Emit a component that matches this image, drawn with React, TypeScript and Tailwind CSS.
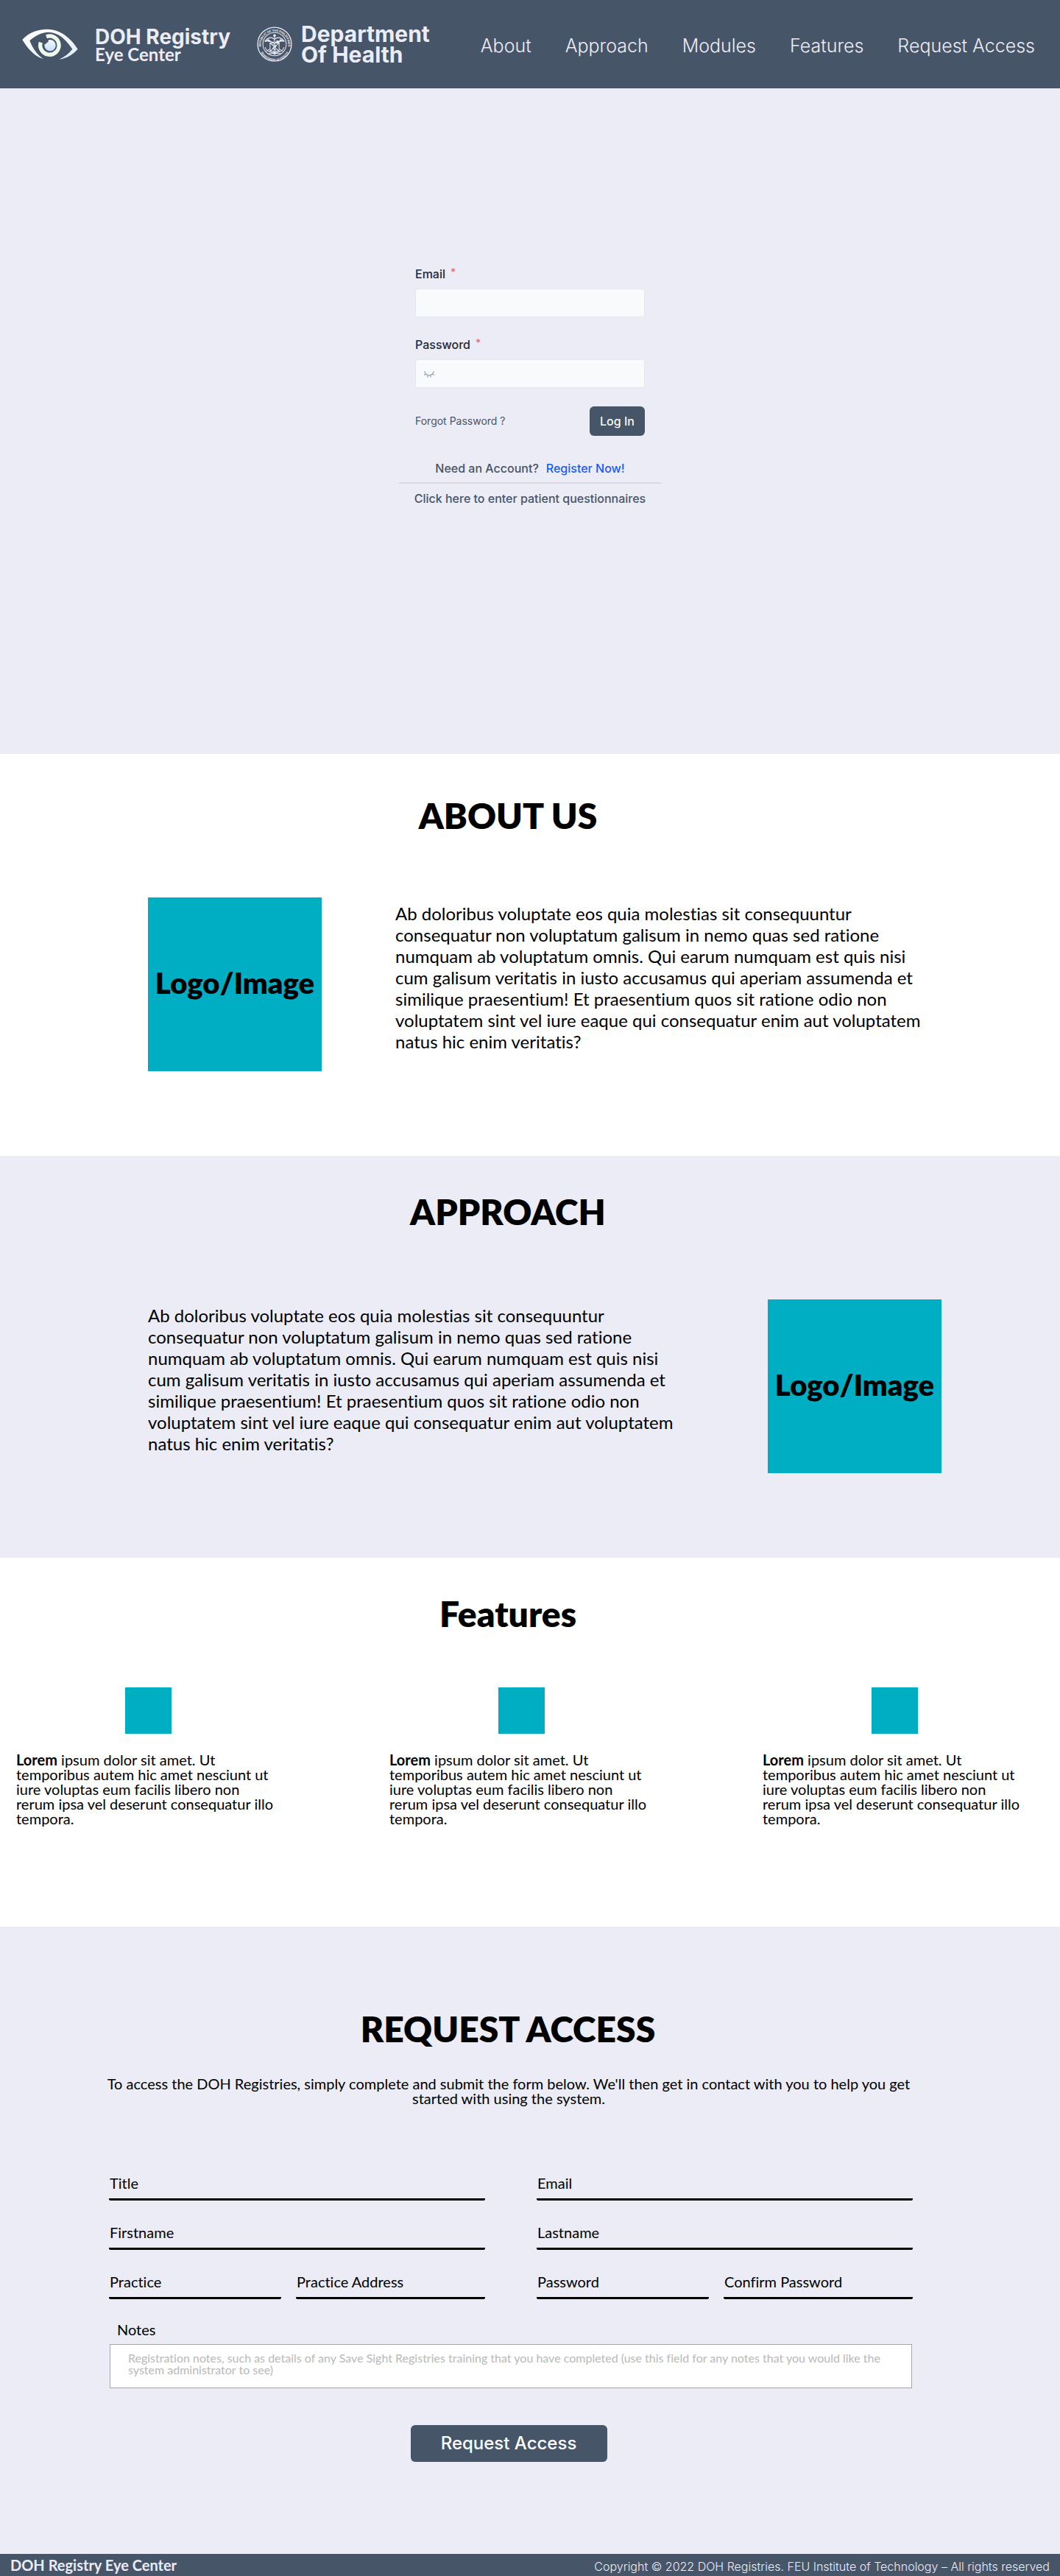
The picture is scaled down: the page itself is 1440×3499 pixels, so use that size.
import type { ReactNode } from 'react';

const navItems = ['About', 'Approach', 'Modules', 'Features', 'Request Access'];

const blurb =
  'Ab doloribus voluptate eos quia molestias sit consequuntur consequatur non voluptatum galisum in nemo quas sed ratione numquam ab voluptatum omnis. Qui earum numquam est quis nisi cum galisum veritatis in iusto accusamus qui aperiam assumenda et similique praesentium! Et praesentium quos sit ratione odio non voluptatem sint vel iure eaque qui consequatur enim aut voluptatem natus hic enim veritatis?';

function EyeLogo() {
  return (
    <svg viewBox="30 38 228 126" className="h-[42px] w-[76px] shrink-0" aria-hidden="true">
      <defs>
        <linearGradient id="lid" x1="0" y1="0" x2="1" y2="1">
          <stop offset="0" stopColor="#ffffff" />
          <stop offset="0.5" stopColor="#f3f8ff" />
          <stop offset="1" stopColor="#dcebfd" />
        </linearGradient>
        <linearGradient id="pupil" x1="0" y1="0" x2="0" y2="1">
          <stop offset="0" stopColor="#f4f9ff" />
          <stop offset="1" stopColor="#c5dffb" />
        </linearGradient>
      </defs>
      <path
        fill="url(#lid)"
        d="M31 83C55 54 95 40 132 40C185 40 228 75 257 121C238 142 215 158 181 163C205 152 222 138 235 121C205 76 175 53 138 52C110 52 80 68 61 87C72 115 90 145 117 161C80 151 52 118 31 83Z"
      />
      <path d="M129 70A38 38 0 1 1 106 94" fill="none" stroke="#f0faea" strokeWidth="16" />
      <path
        fill="url(#pupil)"
        d="M144 83A23 23 0 1 1 122 100C127 101 131 98 130 94C136 96 139 91 136 86A23 23 0 0 1 144 83Z"
      />
    </svg>
  );
}

function HealthSeal() {
  return (
    <svg viewBox="0 0 94 94" className="h-12 w-12 shrink-0" role="img" aria-label="Department of Health seal">
      <defs>
        <path id="seal-top" d="M12 58A36 36 0 1 1 82 58" />
        <path id="seal-bottom" d="M6 50A41 41 0 0 0 88 50" />
      </defs>
      <g fill="none" stroke="#ebecf5">
        <circle cx="47" cy="47" r="45" strokeWidth="2.5" />
        <circle cx="47" cy="47" r="31" strokeWidth="2" />
        <path d="M47 24V70M35 44H59V66H35ZM35 44L59 66M59 44L35 66" strokeWidth="2" />
        <path d="M47 34C38 26 28 30 21 40C30 35 34 42 45 42M47 34C56 26 66 30 73 40C64 35 60 42 49 42" strokeWidth="2.5" />
        <path d="M42 48C53 50 53 54 46 55C40 57 43 62 51 62M22 55C24 64 32 68 42 70M72 55C70 64 62 68 52 70M26 66L34 60M68 66L60 60M30 72L64 72" strokeWidth="2" />
      </g>
      <g fill="#ebecf5">
        <circle cx="47" cy="24" r="3.5" />
        <path d="M52 37H60V43H52ZM40 68H54L47 76ZM24 38L31 34L40 41ZM70 38L63 34L54 41Z" />
      </g>
      <g fill="#ebecf5" fontFamily="Inter, sans-serif" fontWeight="700" textAnchor="middle">
        <text fontSize="8">
          <textPath href="#seal-top" startOffset="50%">REPUBLIC OF THE PHILIPPINES</textPath>
        </text>
        <text fontSize="7">
          <textPath href="#seal-bottom" startOffset="50%">DEPARTMENT OF HEALTH</textPath>
        </text>
      </g>
    </svg>
  );
}

function ClosedEye() {
  return (
    <svg viewBox="0 0 14 9" className="absolute top-4 left-3 h-[9px] w-[14px]" fill="none" stroke="#94a3b8" strokeWidth="1.3" strokeLinecap="round" aria-hidden="true">
      <path d="M0.7 0.8C2 4 4.2 5.9 7 5.9S12 4 13.3 0.8M2.4 3.8L0.8 5.2M11.6 3.8L13.2 5.2M5.3 5.8L4.8 8M8.7 5.8L9.2 8" />
    </svg>
  );
}

function Header() {
  return (
    <header className="flex h-[120px] items-center bg-[#475569] pr-[34px] pl-[30px] text-[#ebecf5]">
      <EyeLogo />
      <p className="ml-[23px] font-['Inter',sans-serif] text-[28px] leading-7 font-bold whitespace-nowrap">
        DOH Registry
        <span className="block font-['Lato',sans-serif] text-2xl leading-5">Eye Center</span>
      </p>
      <div className="ml-9 flex items-center gap-3">
        <HealthSeal />
        <p className="font-['Inter',sans-serif] text-[30px] leading-7 font-bold whitespace-nowrap">
          Department
          <br />
          Of Health
        </p>
      </div>
      <nav className="ml-auto flex items-center gap-[46px] pt-1 font-['Inter',sans-serif] text-[25px] leading-8 font-light whitespace-nowrap">
        {navItems.map((item) => (
          <a key={item} href={'#' + item.toLowerCase().replace(' ', '-')}>
            {item}
          </a>
        ))}
      </nav>
    </header>
  );
}

function LoginField({ id, label, type, children }: { id: string; label: string; type: string; children?: ReactNode }) {
  return (
    <div>
      <label htmlFor={id} className="mb-2 flex gap-[7px] font-medium text-slate-800">
        {label}
        <span className="text-sm leading-5 text-red-400">*</span>
      </label>
      <div className="relative">
        <input id={id} type={type} className="block h-[39px] w-full rounded-[3px] border border-slate-200 bg-slate-50 pr-3 pl-9 text-slate-800" />
        {children}
      </div>
    </div>
  );
}

function Login() {
  return (
    <section className="flex justify-center bg-[#ebecf5] pt-60 pb-[335px] font-['Inter',sans-serif] text-base text-[#475569]">
      <form className="w-[356px]" onSubmit={(e) => e.preventDefault()}>
        <div className="mx-auto flex w-[312px] flex-col gap-[25px]">
          <LoginField id="login-email" label="Email" type="email" />
          <LoginField id="login-password" label="Password" type="password">
            <ClosedEye />
          </LoginField>
          <div className="flex items-center justify-between">
            <a href="#forgot" className="text-sm">
              Forgot Password ?
            </a>
            <button type="submit" className="h-10 w-[75px] rounded-md bg-[#475569] font-medium text-slate-50">
              Log In
            </button>
          </div>
        </div>
        <p className="mt-8 flex justify-center gap-[10px] border-b-2 border-[#d9dade] pb-[7px] font-medium">
          Need an Account?
          <a href="#register" className="text-blue-600">
            Register Now!
          </a>
        </p>
        <a href="#questionnaires" className="mt-2 block text-center font-medium whitespace-nowrap">
          Click here to enter patient questionnaires
        </a>
      </form>
    </section>
  );
}

function Heading({ children }: { children: ReactNode }) {
  return <h2 className="pr-[60px] text-center text-5xl leading-none font-extrabold">{children}</h2>;
}

function ImageBlock() {
  return (
    <div className="flex size-[236px] shrink-0 items-center justify-center bg-[#00aec3] pb-1 text-[40px] leading-none font-extrabold">
      Logo/Image
    </div>
  );
}

function Blurb() {
  return <p className="w-[720px] pt-[7px] text-2xl leading-[29px]">{blurb}</p>;
}

function Feature() {
  return (
    <article className="w-[358px]">
      <div className="mx-auto mb-[25px] size-[63px] bg-[#00aec3]" />
      <p className="text-xl leading-5">
        <b>Lorem</b> ipsum dolor sit amet. Ut temporibus autem hic amet nesciunt ut iure voluptas eum facilis libero non
        rerum ipsa vel deserunt consequatur illo tempora.
      </p>
    </article>
  );
}

function LineField({ id, label, type = 'text' }: { id: string; label: string; type?: string }) {
  return (
    <div className="flex min-w-0 rounded-xs border-b-[3px] border-black pb-[11px] leading-5">
      <label htmlFor={id} className="shrink-0 pl-px">
        {label}
      </label>
      <input id={id} type={type} className="h-5 w-0 min-w-0 flex-1 bg-transparent pl-3 outline-none" />
    </div>
  );
}

function RequestAccess() {
  return (
    <section id="request-access" className="bg-[#ebecf5] pt-[115px] pb-[125px]">
      <Heading>REQUEST ACCESS</Heading>
      <div className="mt-10 pr-[58px]">
        <p className="mx-auto w-[1100px] text-center text-xl leading-5">
          To access the DOH Registries, simply complete and submit the form below. We'll then get in contact with you to
          help you get started with using the system.
        </p>
      </div>
      <form className="mt-[95px] mr-[200px] ml-[148px] text-xl" onSubmit={(e) => e.preventDefault()}>
        <div className="grid grid-cols-2 gap-x-[70px] gap-y-[33px]">
          <LineField id="title" label="Title" />
          <LineField id="email" label="Email" type="email" />
          <LineField id="firstname" label="Firstname" />
          <LineField id="lastname" label="Lastname" />
          <div className="grid grid-cols-[234fr_257fr] gap-5">
            <LineField id="practice" label="Practice" />
            <LineField id="practice-address" label="Practice Address" />
          </div>
          <div className="grid grid-cols-[234fr_257fr] gap-5">
            <LineField id="password" label="Password" type="password" />
            <LineField id="confirm-password" label="Confirm Password" type="password" />
          </div>
        </div>
        <label htmlFor="notes" className="mt-[31px] mb-[10px] block pl-[11px] leading-5">
          Notes
        </label>
        <div className="px-px">
          <textarea
            id="notes"
            placeholder="Registration notes, such as details of any Save Sight Registries training that you have completed (use this field for any notes that you would like the system administrator to see)"
            className="block h-[60px] w-full resize-none border border-[#a3a5a9] bg-white px-6 pt-[10px] text-base leading-4 outline-none placeholder:text-[#b9b9b9]"
          />
        </div>
        <div className="mt-[50px] flex justify-center pr-[6px]">
          <button
            type="submit"
            className="h-[50px] w-[267px] rounded-md bg-[#475569] font-['Inter',sans-serif] text-2xl font-medium text-white"
          >
            Request Access
          </button>
        </div>
      </form>
    </section>
  );
}

export default function App() {
  return (
    <div className="bg-white font-['Lato',sans-serif] text-black [font-variant-ligatures:none]">
      <Header />
      <main>
        <Login />
        <section id="about" className="pt-[60px] pb-[115px]">
          <Heading>ABOUT US</Heading>
          <div className="mt-[87px] flex gap-[100px] pl-[201px]">
            <ImageBlock />
            <Blurb />
          </div>
        </section>
        <section id="approach" className="bg-[#ebecf5] pt-[52px] pb-[115px]">
          <Heading>APPROACH</Heading>
          <div className="mt-[95px] flex justify-between pr-[161px] pl-[201px]">
            <Blurb />
            <ImageBlock />
          </div>
        </section>
        <section id="features" className="pt-[52px] pb-[137px]">
          <Heading>Features</Heading>
          <div className="mt-[76px] flex justify-between pr-[46px] pl-[22px]">
            <Feature />
            <Feature />
            <Feature />
          </div>
        </section>
        <RequestAccess />
      </main>
      <footer className="flex h-[30px] items-center justify-between bg-[#475569] px-[14px] text-[#ebecf5]">
        <p className="text-xl leading-[30px] font-bold">DOH Registry Eye Center</p>
        <p className="pt-[5px] font-['Inter',sans-serif] text-base leading-[25px] font-light">
          Copyright © 2022 DOH Registries. FEU Institute of Technology – All rights reserved
        </p>
      </footer>
    </div>
  );
}
